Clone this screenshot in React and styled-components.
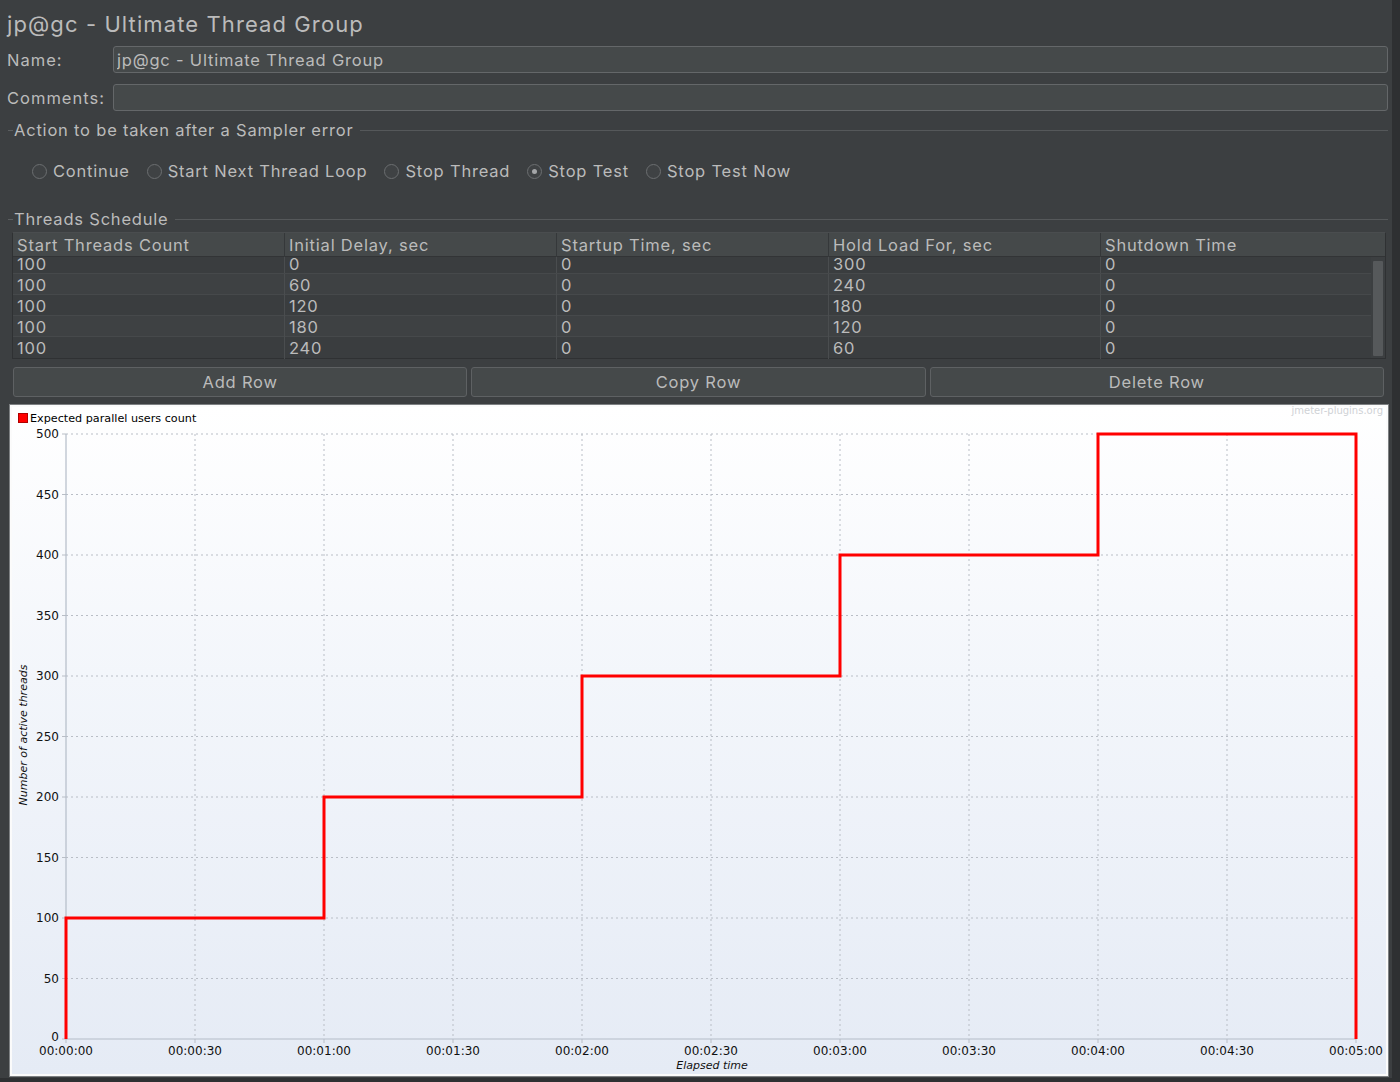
import React from 'react';
import styled, { createGlobalStyle } from 'styled-components';

const Global = createGlobalStyle`
  html, body { margin: 0; padding: 0; background: #2e3032; }
  body { font-family: Inter, "Noto Sans", sans-serif; color: #bbbbbb; }
  * { box-sizing: border-box; }
`;

const LS = '0.8px';

const Panel = styled.div`
  width: 1392px;
  height: 1078px;
  background: #3c3f41;
  padding: 11px 4px 0 7px;
  display: flex;
  flex-direction: column;
`;

const Title = styled.div`
  font-size: 22px;
  line-height: 26px;
  letter-spacing: 1.1px;
  color: #bbbbbb;
`;

const FormRow = styled.div`
  display: flex;
  align-items: center;
  height: 27px;
  margin-top: ${p => p.$gap}px;
`;

const Label = styled.div`
  width: 106px;
  flex: none;
  font-size: 16.5px;
  letter-spacing: 1px;
`;

const TextField = styled.input`
  flex: 1;
  height: 27px;
  background: #45494a;
  border: 1px solid #646769;
  border-radius: 3px;
  padding: 0 3px;
  font-family: Inter, "Noto Sans", sans-serif;
  font-size: 16.5px;
  letter-spacing: ${LS};
  color: #bbbbbb;
  outline: none;
`;

const SectionTitle = styled.div`
  display: flex;
  align-items: center;
  height: 18px;
  margin-top: ${p => p.$gap}px;
  margin-left: 1px;
  font-size: 16.5px;
  letter-spacing: ${LS};
  &::before {
    content: '';
    width: 5px;
    height: 1px;
    background: #5b5e60;
    margin-right: 1px;
  }
  &::after {
    content: '';
    flex: 1;
    height: 1px;
    background: #55585a;
    margin-left: 6px;
  }
`;

const RadioRow = styled.div`
  display: flex;
  align-items: center;
  height: 20px;
  margin-top: 22px;
  padding-left: 25px;
  gap: 17px;
`;

const RadioItem = styled.label`
  display: flex;
  align-items: center;
  gap: 6px;
  font-size: 16.5px;
  letter-spacing: ${LS};
  color: #bbbbbb;
`;

const RadioCircle = styled.span`
  width: 15px;
  height: 15px;
  border-radius: 50%;
  border: 1px solid #6b6e70;
  background: #3f4244;
  display: flex;
  align-items: center;
  justify-content: center;
  &::after {
    content: '';
    width: 5px;
    height: 5px;
    border-radius: 50%;
    background: ${p => (p.$checked ? '#a4a6a8' : 'transparent')};
  }
`;

const Table = styled.div`
  margin: 4px 2px 0 5px;
  border: 1px solid #2f3133;
  border-top-color: #4a4d4f;
`;

const HeaderRow = styled.div`
  display: grid;
  grid-template-columns: 272px 272px 272px 272px 1fr;
  height: 24px;
  background: #45494a;
  border-bottom: 1px solid #323436;
`;

const HeaderCell = styled.div`
  padding-left: 4px;
  font-size: 16.5px;
  letter-spacing: ${LS};
  line-height: 25px;
  border-right: 1px solid #35383a;
  &:last-child { border-right: none; }
`;

const BodyWrap = styled.div`
  display: flex;
  height: 101px;
`;

const Rows = styled.div`
  flex: 1;
`;

const Row = styled.div`
  display: grid;
  grid-template-columns: 272px 272px 272px 272px 1fr;
  height: ${p => (p.$first ? 17 : 21)}px;
  line-height: ${p => (p.$first ? 15 : 22)}px;
  background: ${p => (p.$odd ? '#3e4143' : '#3a3d3f')};
  border-bottom: 1px solid #46494b;
  &:last-child { border-bottom: none; }
`;

const Cell = styled.div`
  padding-left: 4px;
  font-size: 16.5px;
  letter-spacing: ${LS};
  border-right: 1px solid #4a4d4f;
  &:last-child { border-right: none; }
`;

const ScrollTrack = styled.div`
  width: 14px;
  flex: none;
  background: #3c3f41;
  padding: 4px 2px 2px 2px;
  display: flex;
`;

const ScrollThumb = styled.div`
  flex: 1;
  background: #56595b;
  border-radius: 1px;
`;

const ButtonBar = styled.div`
  display: grid;
  grid-template-columns: 1fr 1fr 1fr;
  gap: 4px;
  margin: 8px 4px 0 6px;
`;

const Button = styled.button`
  height: 30px;
  background: #45494a;
  border: 1px solid #5e6163;
  border-radius: 3px;
  font-family: Inter, "Noto Sans", sans-serif;
  font-size: 16.5px;
  letter-spacing: ${LS};
  color: #bbbbbb;
  padding: 0;
`;

const ChartBox = styled.div`
  margin: 8px 0 0 3px;
  height: 671px;
  border: 2px solid #fbfbfb;
  outline: 1px solid #7d8082;
  background: linear-gradient(to bottom, #ffffff 0%, #f3f6fb 40%, #e5ebf5 100%);
`;

const ChartSvg = styled.svg`
  display: block;
  width: 100%;
  height: 100%;
  overflow: visible;
  font-family: "DejaVu Sans", sans-serif;
`;

const rows = [
  ['100', '0', '0', '300', '0'],
  ['100', '60', '0', '240', '0'],
  ['100', '120', '0', '180', '0'],
  ['100', '180', '0', '120', '0'],
  ['100', '240', '0', '60', '0'],
];

const X0 = 54, X1 = 1344, Y0 = 632, Y1 = 27;
const tx = t => X0 + (t / 300) * (X1 - X0);
const vy = v => Y0 - (v / 500) * (Y0 - Y1);
const xLabels = ['00:00:00', '00:00:30', '00:01:00', '00:01:30', '00:02:00', '00:02:30', '00:03:00', '00:03:30', '00:04:00', '00:04:30', '00:05:00'];
const steps = [[0, 0], [0, 100], [60, 100], [60, 200], [120, 200], [120, 300], [180, 300], [180, 400], [240, 400], [240, 500], [300, 500], [300, 0]];

function Chart() {
  const pts = steps.map(([t, v]) => `${tx(t)},${vy(v)}`).join(' ');
  return (
    <ChartSvg viewBox="0 0 1374 667">
      <text x="1371" y="7" fontSize="10" fill="#cfd2d6" textAnchor="end">jmeter-plugins.org</text>
      <rect x="6.5" y="6.5" width="9" height="9" fill="#ff0000" stroke="#b00000" strokeWidth="1" />
      <text x="18" y="15" fontSize="11.2" fill="#000">Expected parallel users count</text>
      {Array.from({ length: 11 }, (_, i) => {
        const y = vy(i * 50);
        return (
          <g key={'h' + i}>
            {i > 0 && <line x1={X0} x2={X1} y1={y} y2={y} stroke="#b9bec6" strokeWidth="1" strokeDasharray="2 3" />}
            <line x1={X0 - 4} x2={X0} y1={y} y2={y} stroke="#b9bec6" strokeWidth="1" />
            <text x={X0 - 7} y={i === 0 ? y + 2 : y + 4} fontSize="12" fill="#111" textAnchor="end">{i * 50}</text>
          </g>
        );
      })}
      {xLabels.map((l, i) => {
        const x = tx(i * 30);
        return (
          <g key={'v' + i}>
            {i > 0 && <line x1={x} x2={x} y1={Y1} y2={Y0} stroke="#b9bec6" strokeWidth="1" strokeDasharray="2 3" />}
            <line x1={x} x2={x} y1={Y0} y2={Y0 + 4} stroke="#b9bec6" strokeWidth="1" />
            <text x={x} y={648} fontSize="12" fill="#111" textAnchor="middle">{l}</text>
          </g>
        );
      })}
      <line x1={X0} x2={X0} y1={Y1} y2={Y0} stroke="#b4bcc8" strokeWidth="1.2" />
      <line x1={X0} x2={X1} y1={Y0} y2={Y0} stroke="#b4bcc8" strokeWidth="1.2" />
      <polyline points={pts} fill="none" stroke="#ff0000" strokeWidth="3" strokeLinejoin="miter" />
      <text x="700" y="662" fontSize="11" fontStyle="italic" fill="#111" textAnchor="middle">Elapsed time</text>
      <text transform="translate(15 328) rotate(-90)" fontSize="11" fontStyle="italic" fill="#111" textAnchor="middle">Number of active threads</text>
    </ChartSvg>
  );
}

const radios = [
  ['Continue', false],
  ['Start Next Thread Loop', false],
  ['Stop Thread', false],
  ['Stop Test', true],
  ['Stop Test Now', false],
];

export default function App() {
  return (
    <>
      <Global />
      <Panel>
        <Title>jp@gc - Ultimate Thread Group</Title>
        <FormRow $gap={9}>
          <Label>Name:</Label>
          <TextField readOnly value="jp@gc - Ultimate Thread Group" />
        </FormRow>
        <FormRow $gap={11}>
          <Label>Comments:</Label>
          <TextField readOnly value="" />
        </FormRow>
        <SectionTitle $gap={10}>Action to be taken after a Sampler error</SectionTitle>
        <RadioRow>
          {radios.map(([l, c]) => (
            <RadioItem key={l}>
              <RadioCircle $checked={c} />
              {l}
            </RadioItem>
          ))}
        </RadioRow>
        <SectionTitle $gap={29}>Threads Schedule</SectionTitle>
        <Table>
          <HeaderRow>
            {['Start Threads Count', 'Initial Delay, sec', 'Startup Time, sec', 'Hold Load For, sec', 'Shutdown Time'].map(h => (
              <HeaderCell key={h}>{h}</HeaderCell>
            ))}
          </HeaderRow>
          <BodyWrap>
            <Rows>
              {rows.map((r, i) => (
                <Row key={i} $odd={i % 2 === 1} $first={i === 0}>
                  {r.map((c, j) => <Cell key={j}>{c}</Cell>)}
                </Row>
              ))}
            </Rows>
            <ScrollTrack><ScrollThumb /></ScrollTrack>
          </BodyWrap>
        </Table>
        <ButtonBar>
          <Button>Add Row</Button>
          <Button>Copy Row</Button>
          <Button>Delete Row</Button>
        </ButtonBar>
        <ChartBox>
          <Chart />
        </ChartBox>
      </Panel>
    </>
  );
}
